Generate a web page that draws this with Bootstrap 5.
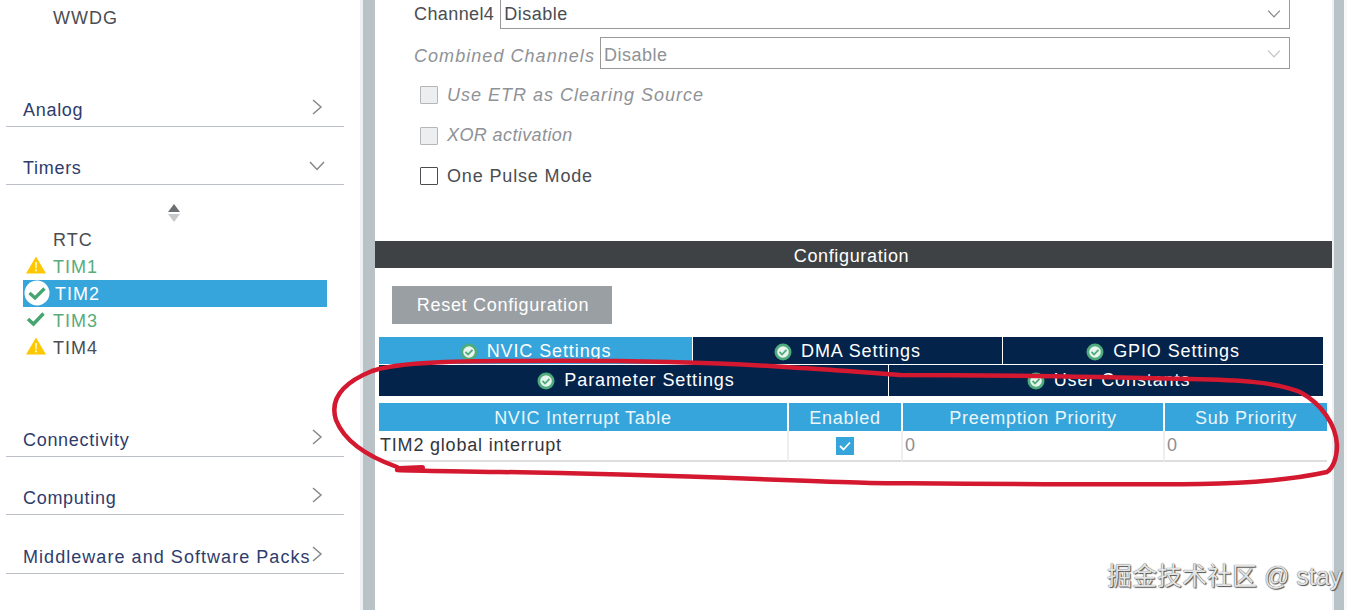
<!doctype html>
<html lang="en">
<head>
    <meta charset="utf-8">
    <meta name="viewport" content="width=device-width, initial-scale=1">
    <title>TIM2 Configuration</title>
    <link href="https://cdn.jsdelivr.net/npm/bootstrap@5.3.3/dist/css/bootstrap.min.css" rel="stylesheet">
    <style>
        html, body { height: 610px; overflow: hidden; }
        body { background: #fff; font-family: "Liberation Sans", Arial, sans-serif; font-size: 18px; letter-spacing: .4px; color: #4a4d52; }
        .page-wrap { height: 610px; width: 1361px; position: relative; }
        .side-pane { width: 360px; padding-top: 4px; flex: none; }
        .split-bar { background: #b9c2c7; width: 12px; margin-left: 3px; flex: none; box-shadow: -3px 0 0 #eef1f3; }
        .split-bar.right-bar { width: 10px; margin-left: 2px; box-shadow: -2px 0 0 #eef1f3, 3px 0 0 #f8f9fa; }
        .main-pane { width: 957px; flex: none; }
        .tree-item { height: 27px; line-height: 28px; margin-left: 23px; width: 304px; position: relative; padding-left: 30px; letter-spacing: 1px; }
        .tree-item svg { position: absolute; left: 3px; top: 3px; }
        .tree-item svg.ic-big { left: 1px; top: 0; }
        .tree-item.is-ok { color: #58ab7c; }
        .tree-item.is-active { background: #36a5db; color: #fff; padding-left: 32px; }
        .cat-head { height: 34px; margin: 24px 16px 0 6px; padding: 2px 21px 0 17px; border-bottom: 1px solid #bcc0cb; color: #2e3c6c; display: flex; justify-content: space-between; align-items: center; letter-spacing: .7px; white-space: nowrap; }
        .cat-head svg { margin: -8px 0 0 0; flex: none; }
        .cat-head svg.ic-chev-down { margin-right: -3px; margin-top: -6px; }
        .cat-wide { letter-spacing: 1.05px; margin-top: 25px; }
        .cat-first { margin-top: 62px; }
        .cat-after-list { margin-top: 62px; }
        .sort-arrows { height: 41px; padding: 19px 0 0 167px; }
        .param-row { height: 38px; padding-left: 39px; }
        .param-box { height: 32px; line-height: 34px; border: 1px solid #999; padding: 0 0 0 3px; width: 790px; position: relative; margin-left: 6px; letter-spacing: .5px; }
        .param-box svg { position: absolute; right: 7px; top: 11px; }
        .param-top { height: 29px; padding-left: 39px; margin-bottom: 8px; }
        .param-top .param-box { border-top: 0; height: 29px; line-height: 29px; }
        .param-top .param-box svg { top: 9px; }
        .param-muted { color: #8f9296; }
        .param-muted .lbl-italic { font-style: italic; }
        .lbl-combo { padding-top: 6px; letter-spacing: 1.05px; white-space: nowrap; }
        .lbl-etr { letter-spacing: 1px; }
        .lbl-pulse { letter-spacing: .85px; }
        .combo-box { width: 690px; margin-left: 5px; }
        .check-row { height: 40.5px; padding-left: 45px; gap: 9px; }
        .check-row .form-check-input { width: 18px; height: 18px; margin: 0; border-radius: 1px; border: 1px solid #4a4d52; opacity: 1; }
        .check-row .form-check-input:disabled { background: #eceef0; border-color: #b4b6b9; opacity: 1; }
        .conf-bar { margin-top: 44.5px; height: 27px; line-height: 31px; padding-right: 4px; background: #3f4244; color: #fff; text-align: center; letter-spacing: .65px; }
        .reset-btn { display: block; margin: 18px 0 13px 17px; width: 220px; height: 38px; padding: 0 0 0 2px; background: #9a9fa4; border: 0; border-radius: 0; color: #fff; font-size: 18px; letter-spacing: .7px; }
        .tab-rows { margin-left: 4px; width: 944px; }
        .tab-line { gap: 1px; margin-bottom: 1px; }
        .tab-cell { background: #03234b; color: #fff; display: flex; align-items: center; justify-content: center; gap: 9px; letter-spacing: .9px; }
        .tab-cell.tab-on { background: #36a5db; }
        .tab-line-a .tab-cell { height: 27px; padding-top: 2px; }
        .tab-line-b { margin-bottom: 7px; }
        .tab-line-b .tab-cell { height: 31px; padding-left: 5px; }
        .nvic-table { width: 948px; margin: 0 0 0 4px; table-layout: fixed; border-collapse: separate; border-spacing: 0; font-size: 18px; }
        .nvic-table > :not(caption) > * > * { padding: 0 2px; box-shadow: none; background: transparent; border: 0; }
        .nvic-table th { background: #36a5db; color: #eaf6fc; height: 28px; font-weight: 400; text-align: center; border-left: 2px solid #fff; line-height: 26px; letter-spacing: .75px; }
        .nvic-table thead tr th { padding-top: 2px; }
        .nvic-table th:first-child, .nvic-table td:first-child { border-left: 0; }
        .nvic-table td { height: 31px; line-height: 29px; border-bottom: 2px solid #dcdedf; border-left: 2px solid #eceeef; color: #34363a; vertical-align: middle; }
        .nvic-table td:first-child { padding-left: 1px; letter-spacing: .8px; }
        .nvic-table td.num-cell { color: #8e9092; }
        .red-scribble { position: absolute; left: 0; top: 0; pointer-events: none; }
        .site-mark { position: absolute; left: 1107px; top: 559px; font-family: "Liberation Sans", "Noto Sans CJK SC", sans-serif; font-size: 25px; line-height: 34px; letter-spacing: 0; color: #e4e4e4; text-shadow: 0 0 1px #333, 1px 1px 1px #555; white-space: nowrap; }
    </style>
</head>
<body>
    <svg width="0" height="0" class="position-absolute">
        <defs>
            <symbol id="ic-warn" viewBox="0 0 20 18"><path d="M10 0.5 L20 17.5 H0 Z" fill="#fdc800"/><path d="M9.2 6h1.6l-.3 6.5h-1z M9.2 13.5h1.6v1.8h-1.6z" fill="#fff"/></symbol>
            <symbol id="ic-tick" viewBox="0 0 20 18"><path d="M2 9 L7.5 14 L17.5 3.5" fill="none" stroke="#45a56f" stroke-width="3.4"/></symbol>
            <symbol id="ic-okwhite" viewBox="0 0 26 26"><circle cx="13" cy="13" r="12.5" fill="#fff"/><path d="M5.5 13 L11 18 L20.5 8.5" fill="none" stroke="#45a56f" stroke-width="3.2"/></symbol>
            <symbol id="ic-tab" viewBox="0 0 18 18"><circle cx="9" cy="9" r="8.5" fill="#4eab7b"/><circle cx="9" cy="9" r="5.8" fill="#e8f4ee"/><path d="M5.5 8.8 L8 11.5 L12.5 6.8" fill="none" stroke="#4eab7b" stroke-width="1.8"/></symbol>
            <symbol id="ic-right" viewBox="0 0 12 18"><path d="M2 2 L10 9 L2 16" fill="none" stroke="#85888c" stroke-width="1.5"/></symbol>
            <symbol id="ic-down" viewBox="0 0 18 12"><path d="M2 2 L9 9.5 L16 2" fill="none" stroke="#85888c" stroke-width="1.5"/></symbol>
        </defs>
    </svg>

    <div class="page-wrap d-flex">
        <aside class="side-pane">
            <div class="tree-item">WWDG</div>

            <div class="cat-head cat-first">Analog <svg width="12" height="18"><use href="#ic-right"/></svg></div>
            <div class="cat-head">Timers <svg width="18" height="12" class="ic-chev-down"><use href="#ic-down"/></svg></div>

            <div class="sort-arrows">
                <svg width="14" height="18" viewBox="0 0 14 18" class="d-block"><path d="M7 0 L13 8 H1 Z" fill="#6b6e72"/><path d="M7 18 L13 10 H1 Z" fill="#c6c8ca"/></svg>
            </div>
            <div class="tree-item">RTC</div>
            <div class="tree-item is-ok"><svg width="20" height="18"><use href="#ic-warn"/></svg>TIM1</div>
            <div class="tree-item is-active"><svg width="26" height="26" class="ic-big"><use href="#ic-okwhite"/></svg>TIM2</div>
            <div class="tree-item is-ok"><svg width="20" height="18"><use href="#ic-tick"/></svg>TIM3</div>
            <div class="tree-item"><svg width="20" height="18"><use href="#ic-warn"/></svg>TIM4</div>

            <div class="cat-head cat-after-list">Connectivity <svg width="12" height="18"><use href="#ic-right"/></svg></div>
            <div class="cat-head">Computing <svg width="12" height="18"><use href="#ic-right"/></svg></div>
            <div class="cat-head cat-wide">Middleware and Software Packs <svg width="12" height="18"><use href="#ic-right"/></svg></div>
        </aside>

        <div class="split-bar"></div>

        <main class="main-pane">
            <div class="param-top d-flex align-items-center">
                <span>Channel4</span>
                <div class="param-box">Disable <svg width="16" height="10"><use href="#ic-down"/></svg></div>
            </div>
            <div class="param-row d-flex param-muted">
                <span class="lbl-italic lbl-combo">Combined Channels</span>
                <div class="param-box combo-box">Disable <svg width="16" height="10" class="opacity-50"><use href="#ic-down"/></svg></div>
            </div>
            <div class="check-row d-flex align-items-center param-muted">
                <input class="form-check-input" type="checkbox" disabled>
                <span class="lbl-italic lbl-etr">Use ETR as Clearing Source</span>
            </div>
            <div class="check-row d-flex align-items-center param-muted">
                <input class="form-check-input" type="checkbox" disabled>
                <span class="lbl-italic">XOR activation</span>
            </div>
            <div class="check-row d-flex align-items-center">
                <input class="form-check-input" type="checkbox">
                <span class="lbl-pulse">One Pulse Mode</span>
            </div>

            <div class="conf-bar">Configuration</div>
            <button type="button" class="btn reset-btn">Reset Configuration</button>

            <div class="tab-rows">
                <div class="d-flex tab-line tab-line-a">
                    <div class="tab-cell tab-on" style="width:313px"><svg width="18" height="18"><use href="#ic-tab"/></svg>NVIC Settings</div>
                    <div class="tab-cell" style="width:309px"><svg width="18" height="18"><use href="#ic-tab"/></svg>DMA Settings</div>
                    <div class="tab-cell" style="width:320px"><svg width="18" height="18"><use href="#ic-tab"/></svg>GPIO Settings</div>
                </div>
                <div class="d-flex tab-line tab-line-b">
                    <div class="tab-cell" style="width:509px"><svg width="18" height="18"><use href="#ic-tab"/></svg>Parameter Settings</div>
                    <div class="tab-cell" style="width:434px"><svg width="18" height="18"><use href="#ic-tab"/></svg>User Constants</div>
                </div>
            </div>

            <table class="table nvic-table">
                <colgroup><col style="width:408px"><col style="width:114px"><col style="width:262px"><col style="width:164px"></colgroup>
                <thead>
                    <tr><th>NVIC Interrupt Table</th><th>Enabled</th><th>Preemption Priority</th><th>Sub Priority</th></tr>
                </thead>
                <tbody>
                    <tr>
                        <td>TIM2 global interrupt</td>
                        <td class="text-center">
                            <svg width="18" height="18" viewBox="0 0 18 18" class="d-block mx-auto"><rect width="18" height="18" fill="#36a5db"/><path d="M4 9 L7.5 12.5 L14 5.5" fill="none" stroke="#fff" stroke-width="1.8"/></svg>
                        </td>
                        <td class="num-cell">0</td>
                        <td class="num-cell">0</td>
                    </tr>
                </tbody>
            </table>
        </main>

        <div class="split-bar right-bar"></div>

        <svg class="red-scribble" width="1361" height="610" viewBox="0 0 1361 610">
            <path d="M397 467 C372 458 345 443 336 420 C329 398 345 382 372 371 C395 363 440 361 500 361 C600 360 720 362 800 368 C840 370 870 373 900 375 C1000 375 1100 377 1190 379 C1240 380 1275 382 1300 392 C1322 404 1336 425 1337 445 C1337 458 1333 468 1327 472 C1300 478 1260 483 1200 484 C1100 485 1000 484 870 483 C800 481 650 474 500 472 C450 471 420 471 397 470" fill="none" stroke="#d4182f" stroke-width="4.5" stroke-linecap="round"/>
            <path d="M399 469 L422 468" fill="none" stroke="#d4182f" stroke-width="6" stroke-linecap="round"/>
        </svg>
        <div class="site-mark">掘金技术社区 @ stay</div>
    </div>

    <script src="https://cdn.jsdelivr.net/npm/bootstrap@5.3.3/dist/js/bootstrap.bundle.min.js"></script>
</body>
</html>
